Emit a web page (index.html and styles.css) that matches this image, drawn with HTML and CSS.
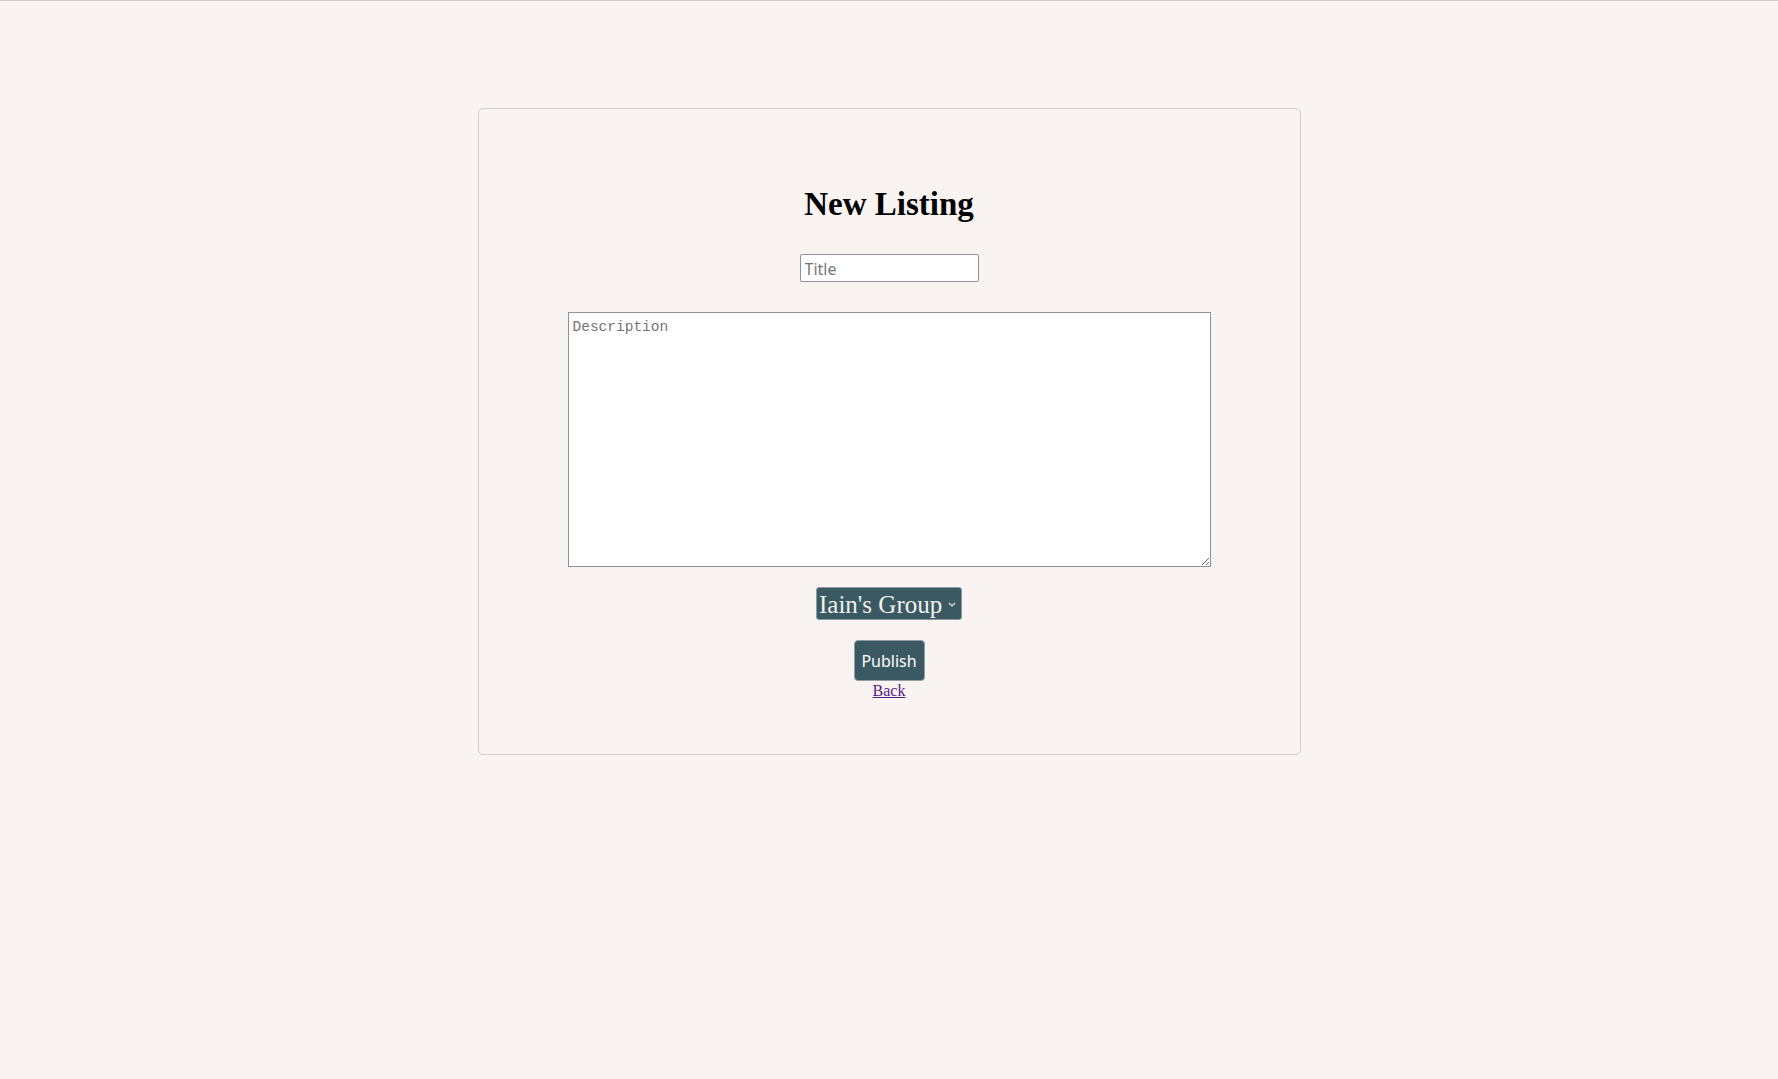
FILE: index.html
```html
<!DOCTYPE html>
<html lang="en">
<head>
<meta charset="utf-8">
<title>New Listing</title>
<link rel="stylesheet" href="styles.css">
</head>
<body>
<div class="topline"></div>
<main class="page">
  <form class="card">
    <h1 class="heading">New Listing</h1>
    <input class="title-input" type="text" placeholder="Title">
    <textarea class="desc" placeholder="Description"></textarea>
    <span class="select-wrap">
      <select class="group-select">
        <option>Iain's Group</option>
      </select>
      <svg class="chev" width="8" height="5" viewBox="0 0 8 5" aria-hidden="true"><path d="M1 1 L4 4 L7 1" fill="none" stroke="#e8eef0" stroke-width="1.2"/></svg>
    </span>
    <button class="publish" type="button">Publish</button>
    <a class="back" href="#">Back</a>
  </form>
</main>
</body>
</html>
```
FILE: styles.css
```css
html, body {
  margin: 0;
  padding: 0;
  background: #f9f4f1;
}
body {
  font-family: "Liberation Serif", "Times New Roman", serif;
  min-height: 1079px;
}
.topline {
  height: 1px;
  background: #cbcbcb;
}
.page {
  display: flex;
  justify-content: center;
  padding-top: 107px;
}
.card {
  width: 821px;
  border: 1px solid #cfcccb;
  border-radius: 5px;
  display: flex;
  flex-direction: column;
  align-items: center;
  padding: 0 0 54px;
  box-sizing: content-box;
}
.heading {
  margin: 77px 0 0;
  font-family: "Liberation Serif", serif;
  font-weight: 700;
  font-size: 33px;
  line-height: 36px;
  color: #000;
}
.title-input {
  margin-top: 32px;
  width: 179px;
  height: 28px;
  box-sizing: border-box;
  border: 1px solid #8f8f9d;
  border-radius: 2px;
  background: #fff;
  padding: 1px 4px 0;
  font-family: "Noto Sans", sans-serif;
  font-size: 16px;
  color: #222;
  outline: none;
}
.title-input::placeholder {
  color: #777;
}
.desc {
  margin-top: 30px;
  width: 643px;
  height: 255px;
  box-sizing: border-box;
  border: 1px solid #8f8f9d;
  border-radius: 0;
  background: #fff;
  padding: 5px 4px;
  font-family: "Liberation Mono", "DejaVu Sans Mono", monospace;
  font-size: 14.5px;
  line-height: 18px;
  outline: none;
}
.desc::placeholder {
  color: #757575;
}
.select-wrap {
  margin-top: 20px;
  position: relative;
  display: inline-flex;
}
.group-select {
  -webkit-appearance: none;
  appearance: none;
  width: 146px;
  height: 33px;
  box-sizing: border-box;
  background: #3b5962;
  color: #f1f1ee;
  border: 1px solid #8d9aa0;
  border-radius: 3px;
  padding: 1px 14px 0 2px;
  font-family: "Liberation Serif", serif;
  font-size: 25px;
  line-height: 31px;
  outline: none;
}
.chev {
  position: absolute;
  right: 6px;
  top: 15px;
  pointer-events: none;
}
.publish {
  margin-top: 20px;
  width: 71px;
  height: 41px;
  box-sizing: border-box;
  background: #3b5962;
  color: #fff;
  border: 1px solid #939ea3;
  border-radius: 4px;
  padding: 0;
  font-family: "Noto Sans", sans-serif;
  font-size: 16px;
}
.back {
  font-family: "Liberation Serif", serif;
  font-size: 16px;
  line-height: 19px;
  color: #551a8b;
  text-decoration: underline;
}
```
